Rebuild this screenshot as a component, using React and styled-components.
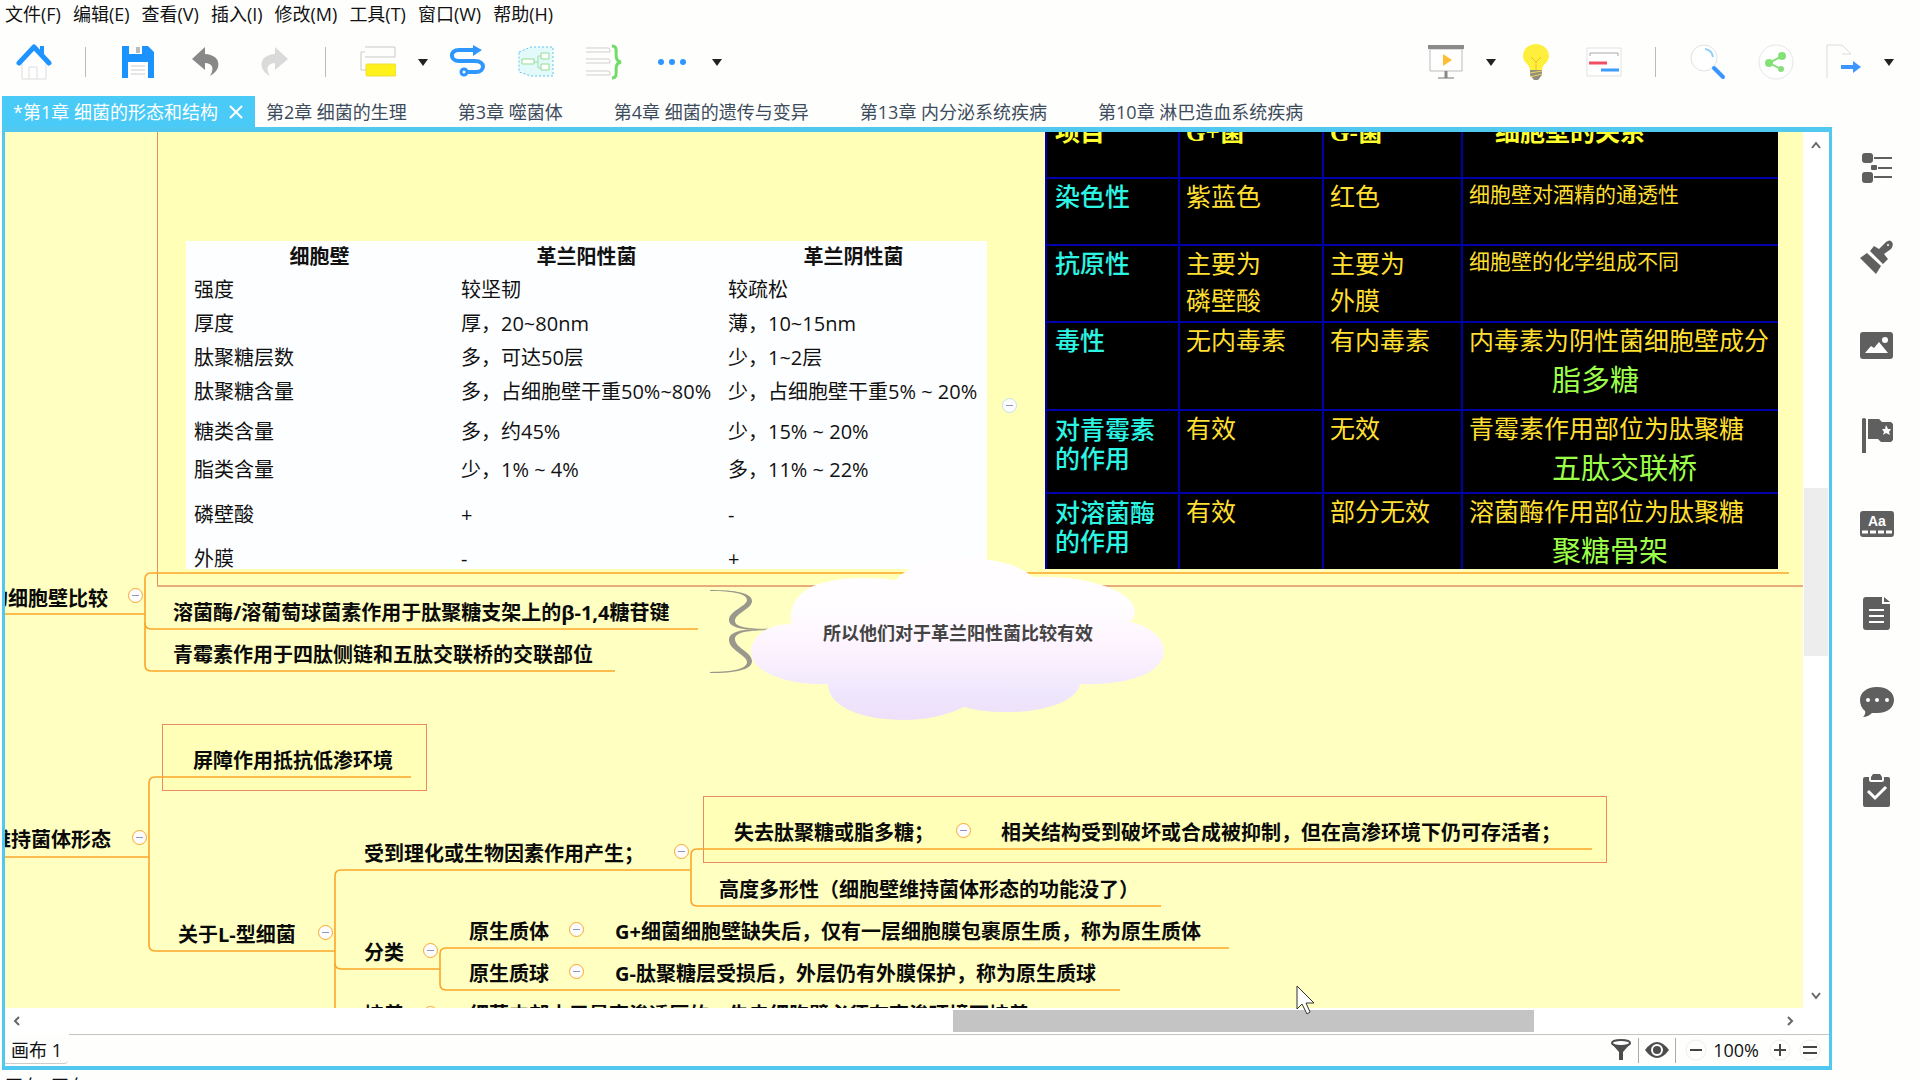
import React from 'react'
import styled, { createGlobalStyle } from 'styled-components'

//  menu
//  toolbar
//  chapter tabs
//  map board (tables, topics, cloud)
//  side panel

const blue = '#50c8f0';
const orange = '#fba628';

const GlobalStyle = createGlobalStyle`
  * { box-sizing: border-box; }
  body {
    margin: 0;
    background: #fefefd;
    color: #111;
    font-family: "Open Sans", "Noto Sans CJK SC", sans-serif;
    font-size: 18px;
  }
  button {
    border: 0;
    padding: 0;
    background: none;
    color: inherit;
    font: inherit;
    white-space: nowrap;
  }
  svg { display: block; }
`;

const Page = styled.div`
  display: flex;
  flex-direction: column;
  height: 100vh;
  overflow: hidden;
`;

const MenuBar = styled.nav`
  display: flex;
  gap: 12px;
  height: 30px;
  padding: 0 0 2px 5px;
  line-height: 28px;
`;

const ToolBar = styled.div`
  display: flex;
  justify-content: space-between;
  height: 66px;
  padding: 0 20px 2px 0;
`;

const ToolGroup = styled.div`
  display: flex;
  align-items: center;
`;

const Tool = styled.button`
  display: flex;
  justify-content: center;
  width: 68px;
`;

const Caret = styled.button`
  display: flex;
  justify-content: center;
  width: 22px;
  &::after {
    content: '';
    border: 5px solid transparent;
    border-top: 7px solid #222;
    border-bottom: 0;
  }
`;

const ToolDivider = styled.div`
  width: 1px;
  height: 30px;
  margin: 0 18px 0 17px;
  background: #bbb;
`;

const TabBar = styled.div`
  display: flex;
  height: 31px;
  padding-left: 2px;
`;

const Tab = styled.div`
  display: flex;
  align-items: center;
  gap: 11px;
  padding: 0 ${props => props.$active ? '12px' : '40px'} 0 11px;
  background: ${props => props.$active ? '#4acaf7' : 'none'};
  color: ${props => props.$active ? '#fff' : '#3d4c5c'};
  line-height: 30px;
`;

const Main = styled.div`
  display: flex;
  flex: 1;
  min-height: 0;
  padding-left: 2px;
`;

const Frame = styled.main`
  position: relative;
  display: flex;
  flex-direction: column;
  flex: 1;
  min-width: 0;
  border: 3px solid ${blue};
  border-top-width: 5px;
  border-bottom-width: 4px;
`;

const MapRow = styled.div`
  display: flex;
  flex: 1;
  min-height: 0;
`;

const Viewport = styled.div`
  position: relative;
  flex: 1;
  overflow: hidden;
  background: #ffffc1;
`;

// the map is scrolled, so its origin lies above and left of the viewport
const Board = styled.div`
  position: absolute;
  left: -5px;
  top: -132px;
  width: 2400px;
  height: 1400px;
`;

const Lines = styled.svg`
  position: absolute;
  left: 0;
  top: 0;
`;

const Topic = styled.div`
  position: absolute;
  left: ${props => props.$x}px;
  top: ${props => props.$y - 13}px;
  color: ${props => props.$soft ? '#444' : '#0a0a0a'};
  font-size: ${props => props.$soft ? 18 : 20}px;
  font-weight: bold;
  line-height: 28px;
  white-space: nowrap;
`;

const Fold = styled.button`
  position: absolute;
  left: ${props => props.$x - 7}px;
  top: ${props => props.$y - 7}px;
  display: flex;
  align-items: center;
  justify-content: center;
  width: 15px;
  height: 15px;
  border: 1px solid ${props => props.$pale ? '#c4e2e6' : orange};
  border-radius: 50%;
  background: #fdfdff;
  &::after {
    content: '';
    width: 7px;
    height: 1px;
    background: #8f95c4;
  }
`;

const Picture = styled.div`
  position: absolute;
  left: ${props => props.$x}px;
  top: ${props => props.$y}px;
  width: ${props => props.$w}px;
  height: ${props => props.$h}px;
  overflow: hidden;
  background: ${props => props.$bg};
`;

const WallTable = styled.table`
  width: 100%;
  table-layout: fixed;
  border-collapse: collapse;
  font-size: 20px;
  line-height: 28px;
  white-space: nowrap;
  th { height: 32px; padding: 0; }
  td { padding: 0 0 0 8px; }
`;

const WallRow = styled.tr`
  height: ${props => props.$h}px;
`;

const SlideTable = styled.table`
  width: 100%;
  table-layout: fixed;
  border-collapse: collapse;
  color: #ffdf30;
  font-family: "Liberation Serif", "Noto Sans CJK SC", serif;
  font-size: 25px;
  line-height: 37px;
  white-space: nowrap;
  th, td {
    padding: 0 0 0 6px;
    border: 2px solid #0000a8;
    border-right-width: 0;
    text-align: left;
    vertical-align: top;
  }
  thead th { padding-top: 2px; color: #ffff2e; }
  thead th:first-child { padding-left: 8px; }
  thead th:last-child { padding-left: 32px; }
  tbody th {
    padding-left: 8px;
    color: #2cf5e4;
    font-weight: 500;
  }
`;

const SlideRow = styled.tr`
  height: ${props => props.$h}px;
`;

const Stacked = styled.div`
  padding-top: 5px;
  line-height: 29px;
`;

const Small = styled.div`
  font-size: 21px;
  line-height: 33px;
`;

const Answer = styled.div`
  padding-left: 83px;
  color: #9cff4a;
  font-size: 29px;
  line-height: 43px;
`;

const VBar = styled.div`
  display: flex;
  flex-direction: column;
  width: 26px;
  padding: 0 1px;
  background: #fff;
`;

const HBar = styled.div`
  display: flex;
  height: 26px;
  padding: 2px 27px 2px 0;
  background: #fff;
`;

const ScrollButton = styled.button`
  display: flex;
  flex: 0 0 ${props => props.$size}px;
  align-items: center;
  justify-content: center;
`;

const Space = styled.div`
  flex: ${props => props.$grow};
`;

const Thumb = styled.div`
  flex: ${props => props.$grow};
  background: ${props => props.$color};
`;

const StatusBar = styled.div`
  display: flex;
  justify-content: space-between;
  height: 32px;
  background: linear-gradient(#c4c4c4, #c4c4c4) 64px 0 / 100% 1px no-repeat;
`;

const SheetTab = styled.button`
  height: 30px;
  padding: 0 6px;
  border-bottom: 1px solid #ccc;
  border-radius: 0 0 4px 0;
`;

const StatusTools = styled.div`
  display: flex;
  align-items: center;
`;

const StatusButton = styled.button`
  display: flex;
  justify-content: center;
  width: ${props => props.$w || 22}px;
`;

const StatusDivider = styled.div`
  width: 1px;
  height: 25px;
  margin: 0 6px;
  background: #aaa;
`;

const Zoom = styled.span`
  padding: 0 10px 0 3px;
  line-height: 28px;
`;

const SidePanel = styled.aside`
  display: flex;
  flex-direction: column;
  align-items: center;
  gap: 53px;
  width: 86px;
  padding-top: 23px;
  margin-left: 2px;
`;

const Footer = styled.footer`
  height: 10px;
  padding: 6px 0 0 5px;
  overflow: hidden;
  line-height: 20px;
`;

const Pointer = styled.svg`
  position: absolute;
  left: 1291px;
  top: 853px;
`;

const menus = ['文件(F)', '编辑(E)', '查看(V)', '插入(I)', '修改(M)', '工具(T)', '窗口(W)', '帮助(H)'];

const chapters = [
  '第2章 细菌的生理',
  '第3章 噬菌体',
  '第4章 细菌的遗传与变异',
  '第13章 内分泌系统疾病',
  '第10章 淋巴造血系统疾病'
];

const wallRows = [
  [34, '强度', '较坚韧', '较疏松'],
  [34, '厚度', '厚，20~80nm', '薄，10~15nm'],
  [34, '肽聚糖层数', '多，可达50层', '少，1~2层'],
  [34, '肽聚糖含量', '多，占细胞壁干重50%~80%', '少，占细胞壁干重5% ~ 20%'],
  [46, '糖类含量', '多，约45%', '少，15% ~ 20%'],
  [30, '脂类含量', '少，1% ~ 4%', '多，11% ~ 22%'],
  [60, '磷壁酸', '+', '-'],
  [28, '外膜', '-', '+']
];

const topics = [
  [-12, 598, '的细胞壁比较'],
  [173, 612, '溶菌酶/溶葡萄球菌素作用于肽聚糖支架上的β-1,4糖苷键'],
  [173, 654, '青霉素作用于四肽侧链和五肽交联桥的交联部位'],
  [193, 760, '屏障作用抵抗低渗环境'],
  [-9, 839, '维持菌体形态'],
  [178, 934, '关于L-型细菌'],
  [364, 853, '受到理化或生物因素作用产生；'],
  [734, 832, '失去肽聚糖或脂多糖；'],
  [1001, 832, '相关结构受到破坏或合成被抑制，但在高渗环境下仍可存活者；'],
  [719, 889, '高度多形性（细胞壁维持菌体形态的功能没了）'],
  [364, 952, '分类'],
  [469, 931, '原生质体'],
  [615, 931, 'G+细菌细胞壁缺失后，仅有一层细胞膜包裹原生质，称为原生质体'],
  [469, 973, '原生质球'],
  [615, 973, 'G-肽聚糖层受损后，外层仍有外膜保护，称为原生质球'],
  [364, 1014, '培养'],
  [469, 1014, '细菌内部由于是高渗透压的，失去细胞壁必须在高渗环境下培养']
];

const folds = [
  [135, 595], [139, 837], [325, 932], [681, 851], [963, 830],
  [430, 950], [576, 929], [576, 971], [430, 1013]
];

const branches = [
  'M0 614H145',
  'M1789 573H151Q145 573 145 579V665Q145 671 151 671H615',
  'M145 623Q145 629 151 629H698',
  'M0 857H149',
  'M411 777H155Q149 777 149 783V945Q149 951 155 951H335',
  'M690 870H341Q335 870 335 876V1100',
  'M335 963Q335 969 341 969H440',
  'M1229 948H446Q440 948 440 954V984Q440 990 446 990H1120',
  'M1592 849H697Q691 849 691 855V900Q691 906 697 906H1161'
];

const brace = 'M710 590C736 590 752 593 752 601C752 609 735 613 735 621C735 628 752 629 774 629C748 631 729 629 729 620C729 611 747 606 747 600C747 594 734 591 710 591Z';

const cloud = 'M791 624C787 590 820 578 862 578Q882 578 896 580C910 563 940 557 970 558C1000 560 1022 566 1032 577C1090 575 1135 592 1135 612Q1134 618 1130 622C1150 626 1164 638 1164 651C1164 672 1130 686 1080 684C1078 700 1045 713 1005 712Q980 712 964 707C945 716 925 720 904 720C860 720 828 706 828 684C785 686 751 671 751 652C751 636 768 624 791 624Z';

function Icon ({ size = 36, children }) {
  return (
    <svg width={size} height={size} viewBox={`0 0 ${size} ${size}`} fill='none'>
      {children}
    </svg>
  )
}

function MainTools () {
  return (
    <ToolGroup>
      <Tool aria-label='主页'>
        <Icon>
          <path d='M6 18V35H30V18L18 6Z' fill='#fff' stroke='#ddd' />
          <path d='M13 35V23H21V35' stroke='#ddd' />
          <path d='M24 2h4v10h-4z' fill='#1f93ff' />
          <path d='M3 19L18 3L33 19' stroke='#1f93ff' strokeWidth='5' strokeLinecap='round' strokeLinejoin='round' />
        </Icon>
      </Tool>
      <ToolDivider />
      <Tool aria-label='保存'>
        <Icon>
          <path d='M2 2H28L34 8V34H2Z' fill='#1b93ff' />
          <path d='M9 2H22V10H9Z' fill='#fff' />
          <path d='M16 3H20V9H16Z' fill='#bbb' />
          <path d='M8 18H28V34H8Z' fill='#fff' />
          <path d='M11 22H25M11 26H25M11 30H25' stroke='#ccc' />
        </Icon>
      </Tool>
      <Tool aria-label='撤销'>
        <Icon>
          <path d='M4 15L17 3V10C34 11 34 26 22 32C27 24 24 19 17 19V26Z' fill='#888' />
        </Icon>
      </Tool>
      <Tool aria-label='重做'>
        <Icon>
          <path d='M32 15L19 3V10C2 11 2 26 14 32C9 24 12 19 19 19V26Z' fill='#dadada' />
        </Icon>
      </Tool>
      <ToolDivider />
      <Tool aria-label='主题'>
        <Icon>
          <path d='M5 3H35V13H5M5 8H1V26H6' stroke='#c9c9c9' />
          <rect x='6' y='20' width='30' height='12' rx='1' fill='#fff21c' stroke='#f1de3c' />
        </Icon>
      </Tool>
      <Caret aria-label='更多主题' />
      <Tool aria-label='联系'>
        <Icon>
          <path d='M26 6H9C-1 6 0 17 9 17H25C36 17 35 28 26 28H17' stroke='#2e96ff' strokeWidth='4' />
          <path d='M23 1L32 6L23 12Z' fill='#2e96ff' />
          <circle cx='14' cy='28' r='3' stroke='#2e96ff' strokeWidth='3' fill='#fff' />
        </Icon>
      </Tool>
      <Tool aria-label='外框'>
        <Icon>
          <path d='M1 8L13 3H35V32H13L1 28Z' fill='#e2fbfa' stroke='#63c0f2' strokeDasharray='2 2' />
          <path d='M16 18H20M27 12H20V24H27' stroke='#a2dca4' />
          <path d='M4 15H16V20H4ZM23 9H31V15H23ZM23 20H31V26H23Z' fill='#fff' stroke='#93dc94' />
        </Icon>
      </Tool>
      <Tool aria-label='概要'>
        <Icon>
          <path d='M0 4H22Q24 4 24 6V8H0M0 15H22Q24 15 24 17V19H0M0 27H22Q24 27 24 29V31H0' stroke='#cfcfcf' />
          <path d='M26 2C35 2 25 16 35 18C25 20 35 34 26 34' stroke='#6fdd68' strokeWidth='3' />
        </Icon>
      </Tool>
      <Tool aria-label='更多'>
        <Icon>
          <g fill='#2e96ff'>
            <circle cx='7' cy='18' r='3' />
            <circle cx='18' cy='18' r='3' />
            <circle cx='29' cy='18' r='3' />
          </g>
        </Icon>
      </Tool>
      <Caret aria-label='更多工具' />
    </ToolGroup>
  )
}

function ViewTools () {
  return (
    <ToolGroup>
      <Tool aria-label='演示'>
        <Icon>
          <path d='M2 5H34V27H2Z' fill='#fff' stroke='#bbb' />
          <path d='M0 1H36V5H0Z' fill='#8b8b8b' />
          <path d='M15 10L24 16L15 22Z' fill='#ffbd35' />
          <path d='M18 27V34' stroke='#888' strokeWidth='3' />
          <path d='M10 34H26' stroke='#777' />
        </Icon>
      </Tool>
      <Caret aria-label='演示选项' />
      <Tool aria-label='头脑风暴'>
        <Icon>
          <path d='M12 26C12 20 5 19 5 12C5 5 11 0 18 0S31 5 31 12C31 19 24 20 24 26Z' fill='#ffef3d' />
          <path d='M13 13L18 18L23 13M18 18V26' stroke='#f0c020' />
          <path d='M12 26H24V31L20 36H16L12 31Z' fill='#8f8f80' />
          <path d='M12 29L24 27M12 33L24 30' stroke='#f3d35a' />
        </Icon>
      </Tool>
      <Tool aria-label='甘特图'>
        <Icon>
          <path d='M1 4H35V32H1Z' fill='#fff' stroke='#e2e2e2' />
          <path d='M4 12V9H32V12' stroke='#aaa' />
          <path d='M3 19H21' stroke='#f04e63' strokeWidth='3' />
          <path d='M15 26H33' stroke='#3d9cff' strokeWidth='3' />
        </Icon>
      </Tool>
      <ToolDivider />
      <Tool aria-label='搜索'>
        <Icon>
          <circle cx='14' cy='14' r='13' fill='#fff' stroke='#e2e2e2' />
          <path d='M15 5Q22 6 23 13' stroke='#8fd0fa' strokeWidth='2' />
          <path d='M24 24L33 33' stroke='#3a96ff' strokeWidth='4' strokeLinecap='round' />
        </Icon>
      </Tool>
      <Tool aria-label='分享'>
        <Icon>
          <circle cx='18' cy='18' r='17' fill='#fff' stroke='#e6e6e6' />
          <path d='M24 12L11 19L23 25' stroke='#86e078' strokeWidth='2' />
          <circle cx='24' cy='12' r='4' fill='#86e078' />
          <circle cx='11' cy='19' r='4' fill='#86e078' />
          <circle cx='23' cy='25' r='3' fill='#86e078' />
        </Icon>
      </Tool>
      <Tool aria-label='导出'>
        <Icon>
          <path d='M1 34V1H16L25 10H16' stroke='#dcdcdc' />
          <path d='M15 23H29' stroke='#3d96ff' strokeWidth='4' />
          <path d='M27 17L35 23L27 29Z' fill='#3d96ff' />
        </Icon>
      </Tool>
      <Caret aria-label='导出选项' />
    </ToolGroup>
  )
}

function CellWallTable () {
  return (
    <Picture $x={186} $y={241} $w={801} $h={328} $bg='#fdfeff'>
      <WallTable>
        <thead>
          <tr><th>细胞壁</th><th>革兰阳性菌</th><th>革兰阴性菌</th></tr>
        </thead>
        <tbody>
          {wallRows.map(([h, name, positive, negative]) => (
            <WallRow key={name} $h={h}>
              <td>{name}</td><td>{positive}</td><td>{negative}</td>
            </WallRow>
          ))}
        </tbody>
      </WallTable>
    </Picture>
  )
}

function SlidePicture () {
  return (
    <Picture $x={1045} $y={110} $w={733} $h={459} $bg='#000'>
      <SlideTable>
        <colgroup>
          <col width='133' /><col width='144' /><col width='139' /><col />
        </colgroup>
        <thead>
          <SlideRow $h={67}><th>项目</th><th>G+菌</th><th>G-菌</th><th>细胞壁的关系</th></SlideRow>
        </thead>
        <tbody>
          <SlideRow $h={67}>
            <th>染色性</th><td>紫蓝色</td><td>红色</td>
            <td><Small>细胞壁对酒精的通透性</Small></td>
          </SlideRow>
          <SlideRow $h={77}>
            <th>抗原性</th><td>主要为<br />磷壁酸</td><td>主要为<br />外膜</td>
            <td><Small>细胞壁的化学组成不同</Small></td>
          </SlideRow>
          <SlideRow $h={88}>
            <th>毒性</th><td>无内毒素</td><td>有内毒素</td>
            <td>内毒素为阴性菌细胞壁成分<Answer>脂多糖</Answer></td>
          </SlideRow>
          <SlideRow $h={83}>
            <th><Stacked>对青霉素<br />的作用</Stacked></th><td>有效</td><td>无效</td>
            <td>青霉素作用部位为肽聚糖<Answer>五肽交联桥</Answer></td>
          </SlideRow>
          <SlideRow $h={83}>
            <th><Stacked>对溶菌酶<br />的作用</Stacked></th><td>有效</td><td>部分无效</td>
            <td>溶菌酶作用部位为肽聚糖<Answer>聚糖骨架</Answer></td>
          </SlideRow>
        </tbody>
      </SlideTable>
    </Picture>
  )
}

function MindMap () {
  return (
    <Board>
      <Lines width='2400' height='1400' fill='none'>
        <g fill='#ffffb7' stroke='#ec8a62' shapeRendering='crispEdges'>
          <path d='M157 0H2300V586H157Z' />
          <path d='M162 724H426V790H162Z' />
          <path d='M703 796H1606V862H703Z' />
        </g>
        <path d='M157 586H2300' stroke='#e8ab7c' strokeWidth='2' />
        <g stroke={orange} strokeWidth='1.6'>
          {branches.map(d => <path key={d} d={d} />)}
        </g>
      </Lines>
      <CellWallTable />
      <SlidePicture />
      <Lines width='2400' height='1400'>
        <defs>
          <linearGradient id='cloud' x1='0' y1='0' x2='0' y2='1'>
            <stop offset='0.3' stopColor='#fffdff' />
            <stop offset='0.56' stopColor='#fdf3ff' />
            <stop offset='0.85' stopColor='#eee6fc' />
            <stop offset='1' stopColor='#efdffa' />
          </linearGradient>
        </defs>
        <g fill='#9a988c'>
          <path d={brace} />
          <path d={brace} transform='matrix(1 0 0 -1.1 0 1322)' />
        </g>
        <path d={cloud} fill='url(#cloud)' />
      </Lines>
      {topics.map(([x, y, text]) => <Topic key={text} $x={x} $y={y}>{text}</Topic>)}
      <Topic $x={823} $y={632} $soft>所以他们对于革兰阳性菌比较有效</Topic>
      {folds.map(([x, y]) => <Fold key={`${x}-${y}`} $x={x} $y={y} aria-label='折叠' />)}
      <Fold $x={1009} $y={405} $pale aria-label='折叠' />
    </Board>
  )
}

function Arrow ({ d }) {
  return (
    <Icon size={12}>
      <path d={d} stroke='#666' strokeWidth='2' />
    </Icon>
  )
}

function Side () {
  return (
    <SidePanel>
      <button aria-label='大纲'>
        <Icon>
          <g fill='#5f5f5f'>
            <rect x='3' y='3' width='11' height='10' rx='3' />
            <rect x='12' y='15' width='6' height='5' rx='1' />
            <rect x='3' y='22' width='11' height='11' rx='3' />
          </g>
          <path d='M15 8H33M19 18H33M15 27H33' stroke='#5f5f5f' strokeWidth='2' />
        </Icon>
      </button>
      <button aria-label='格式'>
        <Icon>
          <path d='M1 19L8 14L22 27L17 35Z' fill='#5f5f5f' />
          <path d='M11 12L15 7L20 10L27 3Q31 0 33 3Q35 6 32 10L25 15L29 20L24 25Z' fill='#5f5f5f' />
          <circle cx='29' cy='6' r='1' fill='#fff' />
        </Icon>
      </button>
      <button aria-label='图片'>
        <Icon>
          <rect x='1' y='4' width='33' height='27' rx='3' fill='#5f5f5f' />
          <path d='M6 25L12 18L15 20L20 14L29 25Z' fill='#fff' />
          <circle cx='26' cy='12' r='3' fill='#fff' />
        </Icon>
      </button>
      <button aria-label='标记'>
        <Icon>
          <path d='M3 2Q5 0 7 2V36H3ZM9 2H20L23 5H32L34 7V23L32 25H22L19 22H9Z' fill='#5f5f5f' />
          <path d='M27 8L29 12L32 12L30 15L31 18L27 16L24 18L25 15L23 12L26 12Z' fill='#fff' />
        </Icon>
      </button>
      <button aria-label='文本'>
        <Icon>
          <rect x='1' y='5' width='34' height='26' rx='3' fill='#5f5f5f' />
          <text x='9' y='20' fill='#fff' fontFamily='"Liberation Sans", sans-serif' fontSize='14' fontWeight='bold'>Aa</text>
          <path d='M3 26H34' stroke='#fff' strokeWidth='3' strokeDasharray='6 2' />
        </Icon>
      </button>
      <button aria-label='笔记'>
        <Icon>
          <path d='M7 2H23V9H31V32Q31 35 28 35H7Q4 35 4 32V5Q4 2 7 2ZM25 2L31 7H25Z' fill='#5f5f5f' />
          <path d='M10 15H25M10 21H25M10 27H25' stroke='#fff' strokeWidth='2' />
        </Icon>
      </button>
      <button aria-label='批注'>
        <Icon>
          <path d='M18 3C29 3 35 9 35 16S29 29 18 29L13 29Q9 33 4 33Q7 30 6 27Q1 23 1 16C1 9 7 3 18 3Z' fill='#5f5f5f' />
          <g fill='#fff'>
            <circle cx='9' cy='16' r='2' />
            <circle cx='18' cy='16' r='2' />
            <circle cx='28' cy='16' r='2' />
          </g>
        </Icon>
      </button>
      <button aria-label='任务'>
        <Icon>
          <path d='M6 4H10V7Q10 9 12 9H23Q25 9 25 7V4H29Q31 4 31 6V32Q31 34 29 34H6Q4 34 4 32V6Q4 4 6 4Z' fill='#5f5f5f' />
          <path d='M12 4L14 1H21L23 4V7H12Z' fill='#5f5f5f' />
          <path d='M9 18L16 25L27 14' stroke='#fff' strokeWidth='3' />
        </Icon>
      </button>
    </SidePanel>
  )
}

export default function App () {
  return (
    <Page>
      <GlobalStyle />
      <MenuBar>
        {menus.map(name => <button key={name}>{name}</button>)}
      </MenuBar>
      <ToolBar>
        <MainTools />
        <ViewTools />
      </ToolBar>
      <TabBar>
        <Tab $active>
          <button>*第1章 细菌的形态和结构</button>
          <button aria-label='关闭'>
            <Icon size={14}>
              <path d='M1 1L13 13M13 1L1 13' stroke='#fff' strokeWidth='2' />
            </Icon>
          </button>
        </Tab>
        {chapters.map(name => <Tab key={name}><button>{name}</button></Tab>)}
      </TabBar>
      <Main>
        <Frame>
          <MapRow>
            <Viewport>
              <MindMap />
            </Viewport>
            <VBar>
              <ScrollButton $size={26} aria-label='向上'><Arrow d='M2 9L6 4L10 9' /></ScrollButton>
              <Space $grow={330} />
              <Thumb $grow={169} $color='#ededed' />
              <Space $grow={326} />
              <ScrollButton $size={26} aria-label='向下'><Arrow d='M2 4L6 9L10 4' /></ScrollButton>
            </VBar>
          </MapRow>
          <HBar>
            <ScrollButton $size={24} aria-label='向左'><Arrow d='M8 2L4 6L8 10' /></ScrollButton>
            <Space $grow={924} />
            <Thumb $grow={581} $color='#c4c4c4' />
            <Space $grow={244} />
            <ScrollButton $size={24} aria-label='向右'><Arrow d='M4 2L8 6L4 10' /></ScrollButton>
          </HBar>
          <StatusBar>
            <SheetTab>画布 1</SheetTab>
            <StatusTools>
              <StatusButton aria-label='筛选'>
                <Icon size={22}>
                  <path d='M1 4L9 13V21H13V13L21 4Z' fill='#4c4c4c' />
                  <ellipse cx='11' cy='4' rx='9' ry='3' fill='#fff' stroke='#4c4c4c' strokeWidth='2' />
                </Icon>
              </StatusButton>
              <StatusDivider />
              <StatusButton $w={24} aria-label='显示'>
                <Icon size={24}>
                  <path d='M0 12Q6 4 12 4T24 12Q18 20 12 20T0 12Z' fill='#4c4c4c' />
                  <circle cx='12' cy='12' r='5' stroke='#fff' strokeWidth='2' />
                </Icon>
              </StatusButton>
              <StatusDivider />
              <StatusButton $w={28} aria-label='缩小'>
                <Icon size={22}>
                  <circle cx='11' cy='11' r='10' stroke='#eee' />
                  <path d='M5 11H17' stroke='#444' strokeWidth='2' />
                </Icon>
              </StatusButton>
              <Zoom>100%</Zoom>
              <StatusButton aria-label='放大'>
                <Icon size={22}>
                  <circle cx='11' cy='11' r='10' stroke='#eee' />
                  <path d='M5 11H17M11 5V17' stroke='#444' strokeWidth='2' />
                </Icon>
              </StatusButton>
              <StatusButton $w={38} aria-label='适应窗口'>
                <Icon size={22}>
                  <circle cx='11' cy='11' r='10' stroke='#eee' />
                  <path d='M4 8H18M4 14H18' stroke='#444' strokeWidth='2' />
                </Icon>
              </StatusButton>
            </StatusTools>
          </StatusBar>
          <Pointer width='20' height='30' viewBox='0 0 20 30'>
            <path d='M1 1V24L6 19L11 29L14 27L10 18H18Z' fill='#fff' stroke='#333' />
          </Pointer>
        </Frame>
        <Side />
      </Main>
      <Footer>画布 (画布 1)</Footer>
    </Page>
  )
}
